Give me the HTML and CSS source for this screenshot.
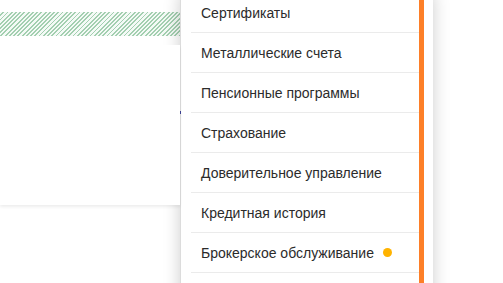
FILE: index.html
```html
<!DOCTYPE html>
<html lang="ru">
<head>
<meta charset="utf-8">
<title>Меню</title>
<link rel="stylesheet" href="styles.css">
</head>
<body>
<div class="screen">
  <div class="left">
    <div class="header">
      <div class="hatch"></div>
    </div>
    <div class="card">
      <span class="mark"></span>
    </div>
  </div>

  <nav class="dropdown">
    <ul class="menu">
      <li class="item">Сертификаты</li>
      <li class="item">Металлические счета</li>
      <li class="item">Пенсионные программы</li>
      <li class="item">Страхование</li>
      <li class="item">Доверительное управление</li>
      <li class="item">Кредитная история</li>
      <li class="item">Брокерское обслуживание <span class="dot"></span></li>
    </ul>
    <div class="accent"></div>
    <div class="gap"></div>
  </nav>
</div>
</body>
</html>
```

FILE: styles.css
```css
* { box-sizing: border-box; }
html, body {
  margin: 0;
  padding: 0;
  background: #fff;
}
.screen {
  position: relative;
  width: 503px;
  height: 283px;
  overflow: hidden;
  font-family: "Liberation Sans", Arial, sans-serif;
}
.left {
  width: 180px;
  display: flex;
  flex-direction: column;
}
.header {
  height: 45px;
  padding-top: 12px;
}
.hatch {
  height: 24px;
  background: repeating-linear-gradient(-45deg, #a3cfb0 0 1.3px, #f4faf6 1.3px 3px);
}
.card {
  position: relative;
  z-index: 2;
  height: 160px;
  background: #fff;
  box-shadow: 0 2px 3px rgba(0, 0, 0, 0.07);
}
.mark {
  position: absolute;
  right: -1px;
  top: 66px;
  width: 1px;
  height: 3px;
  background: #3b3f8f;
}
.dropdown {
  position: absolute;
  z-index: 1;
  left: 180px;
  top: -7px;
  width: 253px;
  height: 310px;
  display: flex;
  background: #fff;
  border-left: 1px solid #dcdcdc;
  box-shadow: 0 0 16px rgba(0, 0, 0, 0.2);
}
.menu {
  flex: 1;
  list-style: none;
  margin: 0;
  padding: 0 0 0 10px;
}
.item {
  height: 40px;
  display: flex;
  align-items: center;
  gap: 9px;
  padding-left: 10px;
  border-bottom: 1px solid #ebebeb;
  font-size: 14px;
  color: #2b2b2b;
  white-space: nowrap;
}
.dot {
  width: 9px;
  height: 9px;
  border-radius: 50%;
  background: #ffb300;
}
.accent {
  width: 5px;
  background: #fd7f28;
}
.gap {
  width: 9px;
}
```
